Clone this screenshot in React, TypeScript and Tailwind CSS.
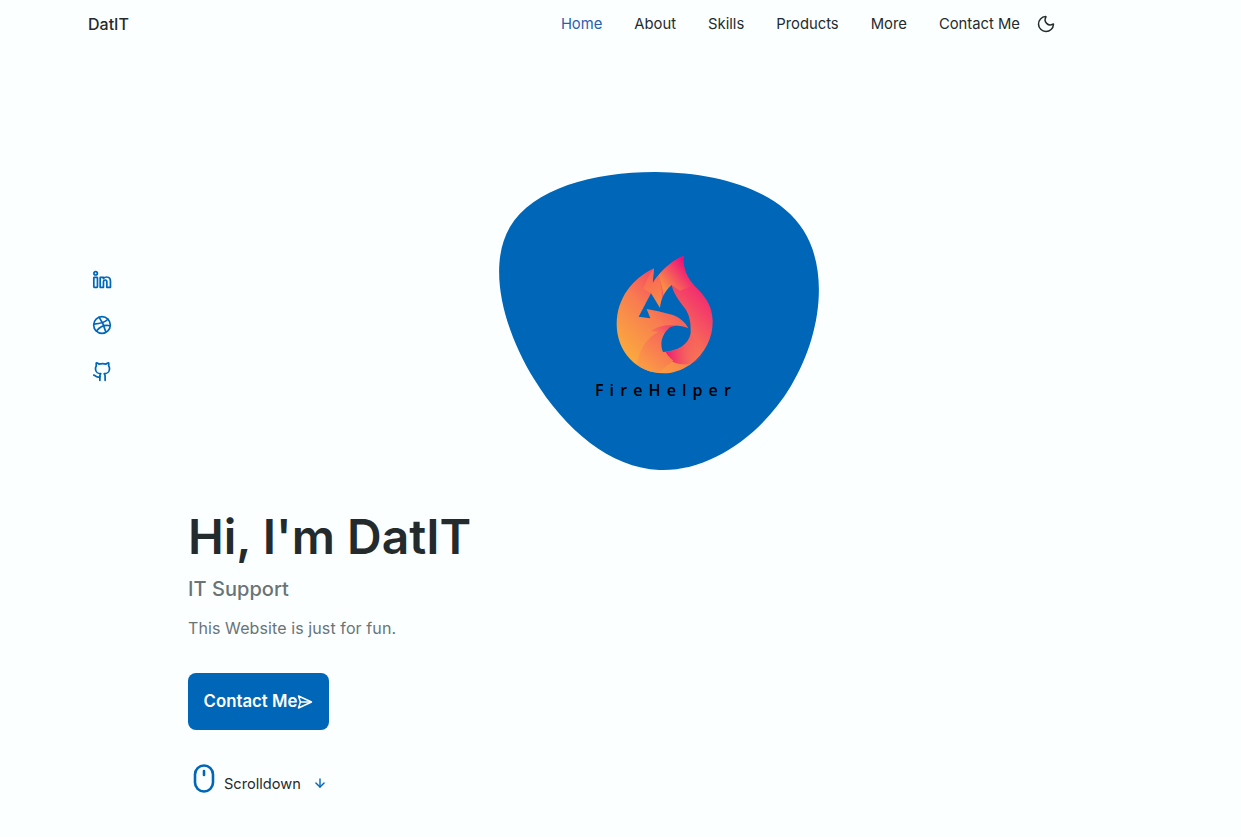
import { ArrowDown, Dribbble, Github, Moon } from "lucide-react";

const links = ["Home", "About", "Skills", "Products", "More", "Contact Me"];

function Linkedin() {
  return (
    <svg width="20" height="20" viewBox="0 0 22 22" fill="none" stroke="currentColor" strokeWidth="1.9" strokeLinejoin="round">
      <circle cx="4" cy="3.6" r="1.9" />
      <rect x="2" y="8" width="4" height="11" rx="0.6" />
      <path d="M9 8h3.6v1.4c1-1.2 2.3-1.8 3.7-1.7 2.6.1 4 1.8 4 4.6V19h-4v-6c0-1.3-.6-2-1.7-2-1.2 0-2 .8-2 2.1V19H9z" />
    </svg>
  );
}

function Blob() {
  return (
    <svg width="320" height="299" viewBox="0 0 200 187" className="block">
      <path
        fill="#0066b8"
        d="M190.312 36.4879C206.582 62.1187 201.309 102.826 182.328 134.186C163.346 165.547 130.807 187.559 100.226 186.353C69.6454 185.297 41.0228 161.023 21.7403 129.362C2.45775 97.8511 -7.48481 59.1033 6.67581 34.5279C20.9871 10.1032 59.7028 -0.149132 97.9666 0.00163737C136.23 0.303176 174.193 10.857 190.312 36.4879Z"
      />
    </svg>
  );
}

function Flame() {
  return (
    <svg width="150" height="130" viewBox="0 0 450 390" className="block">
      <defs>
        <linearGradient id="flame" x1="90" y1="330" x2="340" y2="80" gradientUnits="userSpaceOnUse">
          <stop offset="0" stopColor="#fbb03b" />
          <stop offset="0.45" stopColor="#f87d50" />
          <stop offset="0.8" stopColor="#f43f68" />
          <stop offset="1" stopColor="#ee1a78" />
        </linearGradient>
        <linearGradient id="curl" x1="225" y1="325" x2="340" y2="310" gradientUnits="userSpaceOnUse">
          <stop offset="0" stopColor="#ed0f78" />
          <stop offset="1" stopColor="#f4586a" stopOpacity="0" />
        </linearGradient>
        <linearGradient id="tip" x1="205" y1="90" x2="280" y2="30" gradientUnits="userSpaceOnUse">
          <stop offset="0" stopColor="#f98c45" />
          <stop offset="1" stopColor="#ee0f7c" />
        </linearGradient>
        <linearGradient id="bolt" x1="200" y1="175" x2="185" y2="55" gradientUnits="userSpaceOnUse">
          <stop offset="0" stopColor="#fb8f42" />
          <stop offset="1" stopColor="#f85f5c" />
        </linearGradient>
        <linearGradient id="wing" x1="150" y1="340" x2="250" y2="225" gradientUnits="userSpaceOnUse">
          <stop offset="0" stopColor="#fb9a45" />
          <stop offset="0.7" stopColor="#f76a58" />
          <stop offset="1" stopColor="#f23a70" />
        </linearGradient>
      </defs>
      {/* outer silhouette */}
      <path
        fill="url(#flame)"
        d="M280 18C279 55 289 80 312 106C340 134 366 160 368 212C369 262 345 312 300 344C272 362 246 370 222 370C140 370 80 305 80 222C80 145 128 85 192 55C190 72 189 86 188 100C192 92 198 83 205 76C226 50 252 30 280 18Z"
      />
      <path fill="url(#tip)" d="M280 18C279 55 289 80 312 106L270 122L245 105L222 140C216 110 212 95 205 76C226 50 252 30 280 18Z" />
      <path fill="url(#bolt)" d="M192 55L188 100L205 76C216 105 220 140 210 174L183 130L160 116C168 95 178 72 192 55Z" />
      <path fill="url(#curl)" d="M219 306C262 305 290 285 302 250L345 310C330 330 315 338 295 343C262 346 235 335 219 306Z" />
      <path fill="url(#wing)" d="M140 342C150 295 172 262 205 246L184 243C208 224 250 220 295 235C262 228 236 236 218 255C216 285 222 310 250 332L205 368C175 366 155 356 140 342Z" />
      {/* the one cut-out, from the left hole round the bird to the curl */}
      <path
        fill="#0066b8"
        d="M183 130L210 174C212 150 222 125 245 105C250 130 266 150 282 172C298 192 303 215 302 250C296 285 262 304 219 306C210 285 212 255 240 232C256 224 276 226 295 235C284 214 268 202 249 195L205 184L170 177L181 205L146 200Z"
      />
    </svg>
  );
}

export default function App() {
  return (
    <div className="min-h-[837px] bg-[#fcffff] font-['Inter','Liberation_Sans',sans-serif] text-[#232b2d]">
      <nav className="ml-[88px] flex h-12 w-[968px] items-center justify-between">
        <span className="text-[16px] font-medium">DatIT</span>
        <div className="flex items-center gap-[16px]">
          <ul className="flex gap-[32px] text-[14.8px]">
            {links.map((l, i) => (
              <li key={l} className={i === 0 ? "text-[#2a5fb0]" : ""}>
                {l}
              </li>
            ))}
          </ul>
          <Moon size={20} strokeWidth={1.8} />
        </div>
      </nav>

      <main className="ml-[88px] grid w-[968px] grid-cols-[100px_1fr] pt-[124px]">
        <div className="flex flex-col gap-[25px] pl-[4px] pt-[98px] text-[#0066b8]">
          <Linkedin />
          <Dribbble size={20} strokeWidth={2} />
          <Github size={21} strokeWidth={2} className="-ml-[0.5px] mt-[1px]" />
        </div>

        <div className="relative ml-[311px] h-[298px] w-[320px]">
          <Blob />
          <div className="absolute left-[91px] top-[78px] flex flex-col">
            <Flame />
            <span className="mt-[-2px] pl-[5px] font-['Open_Sans',sans-serif] text-[16px] leading-6 font-semibold tracking-[6.1px] text-black">
              FireHelper
            </span>
          </div>
        </div>

        <div className="col-start-2 pt-[37px]">
          <h1 className="text-[48px] leading-[60px] font-semibold">Hi, I'm DatIT</h1>
          <h3 className="mt-[8px] text-[20px] leading-7 font-medium tracking-[0.05px] text-[#697477]">IT Support</h3>
          <p className="mt-[13px] text-[16px] leading-6 tracking-[0.1px] text-[#697477]">This Website is just for fun.</p>
          <button className="mt-[33px] flex h-[57px] w-[141px] items-center justify-center rounded-lg bg-[#0066b8] text-[16.8px] font-semibold text-white">
            Contact Me
            <svg width="16" height="16" viewBox="0 0 16 16" fill="none" stroke="currentColor" strokeWidth="1.5" strokeLinejoin="round">
              <path d="M1.5 2L14.5 8L1.5 14L3.4 8Z" />
              <path d="M3.4 8H14" />
            </svg>
          </button>
          <div className="mt-[32px] flex items-end">
            <svg width="32" height="32" viewBox="0 0 32 32" fill="none" stroke="#0066b8" strokeWidth="2.6" strokeLinecap="round">
              <rect x="7" y="3.5" width="18" height="26" rx="9" />
              <path d="M16 9v4" />
            </svg>
            <span className="ml-[4px] text-[14.6px] leading-5">Scrolldown</span>
            <ArrowDown size={14} strokeWidth={2.4} className="mb-[4px] ml-[12px] text-[#0066b8]" />
          </div>
        </div>
      </main>
    </div>
  );
}
